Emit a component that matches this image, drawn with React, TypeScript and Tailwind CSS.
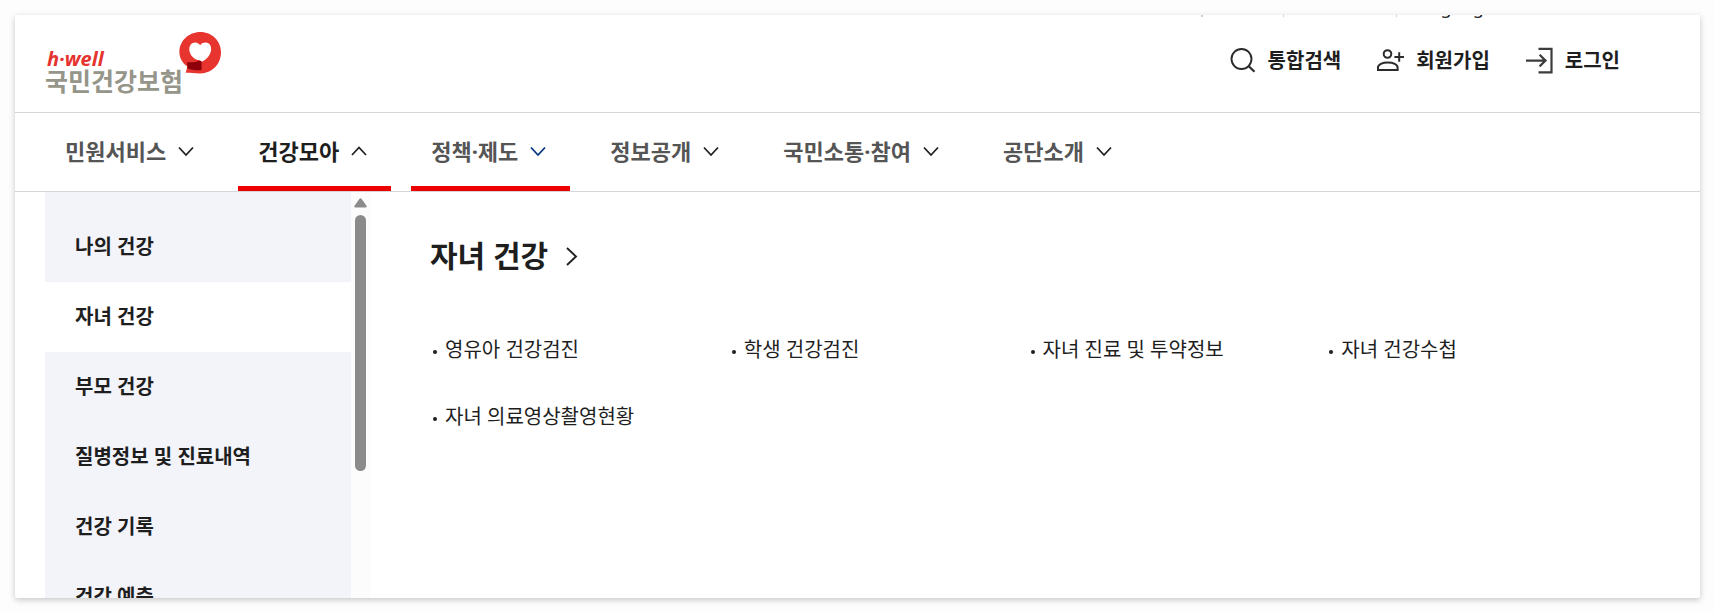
import React from 'react';

type NavItem = {
  label: string;
  open?: boolean;
  marked?: boolean;
};

const navItems: NavItem[] = [
  { label: '민원서비스' },
  { label: '건강모아', open: true, marked: true },
  { label: '정책·제도', marked: true },
  { label: '정보공개' },
  { label: '국민소통·참여' },
  { label: '공단소개' },
];

const sideItems = ['나의 건강', '자녀 건강', '부모 건강', '질병정보 및 진료내역', '건강 기록', '건강 예측'];

const links = ['영유아 건강검진', '학생 건강검진', '자녀 진료 및 투약정보', '자녀 건강수첩', '자녀 의료영상촬영현황'];

const SearchIcon = () => (
  <svg className="w-7 h-7" viewBox="0 0 28 28" fill="none" stroke="#2b2b2b" strokeWidth="1.9" aria-hidden="true">
    <circle cx="13.5" cy="12" r="10" />
    <path d="M20.5 19l6 5.7" strokeWidth="2.2" />
  </svg>
);

const JoinIcon = () => (
  <svg className="w-7 h-7" viewBox="0 0 28 28" fill="none" stroke="#2b2b2b" strokeWidth="2" aria-hidden="true">
    <circle cx="11.5" cy="7" r="3.8" />
    <path d="M2 23v-2.400c0-3 4.400-5 9.800-5s9.800 2 9.800 5V23z" />
    <path d="M18.4 10H28M23.2 5.200v9.600" />
  </svg>
);

const LoginIcon = () => (
  <svg className="w-7 h-7" viewBox="0 0 28 28" fill="none" stroke="#3c3c3c" strokeWidth="2.2" aria-hidden="true">
    <path d="M13.500 1.800h13v23.600h-13" />
    <path d="M1 13.600h19.500M14.600 7.800l5.900 5.800-5.900 5.800" />
  </svg>
);

const Chevron = ({ up, color }: { up?: boolean; color: string }) => (
  <svg className="w-6 h-6" viewBox="0 0 24 24" fill="none" stroke={color} strokeWidth="1.8" aria-hidden="true">
    <path d={up ? 'M5 16l7-7.5 7 7.5' : 'M5 8.5l7 7.5 7-7.5'} />
  </svg>
);

const Logo = () => (
  <a href="#home" className="flex items-start">
    <span className="flex flex-col w-[134px] pt-[17px] whitespace-nowrap">
      <span className="pl-[2px] font-['Open_Sans','Noto_Sans',sans-serif] text-[20px] leading-[20px] font-bold italic text-[#e5332f]">
        h·well
      </span>
      <span className="text-[25px] leading-[24px] font-bold text-[#96958a]">국민건강보험</span>
    </span>
    <svg className="w-[43px] h-[43px]" viewBox="0 0 43 43" aria-hidden="true">
      <path
        d="M21.4 0C33 0 42 9 42 20.3c0 12-9 20.9-20.3 21.1-5 .1-9.5-.6-15-.6l1.7-6.2C3.5 31.3.4 26 .4 20 .4 9 9.5 0 21.4 0z"
        fill="#e7342f"
      />
      <path d="M8.3 30c5 .8 9.500-.2 14.300-2.300V38c-4.600.5-9.600.2-14.300-1.800z" fill="#8e0009" />
      <path
        d="M21.2 13.2c1.500-2 3.400-2.600 5.400-2.600 3.700 0 5.700 3 5.500 6.800-.3 5.400-4.200 9.600-9.200 12.300-1-.9-2.600-1.600-4.300-1.600-5-2-8.300-6.600-8.300-10.700 0-3.900 2.300-6.800 5.800-6.800 2 0 3.700.9 5.100 2.600z"
        fill="#fff"
      />
    </svg>
  </a>
);

const Header = () => (
  <header className="shrink-0 border-b border-[#d6d6d6]">
    <div className="flex items-end justify-end h-1 overflow-hidden pr-[206px] text-[18px] leading-[24px] text-[#1e1e1e]">
      <span className="w-[2px] h-[2px] mb-[2px] mr-20 bg-[#cfcfcf]" />
      <span className="w-px h-[2px] mb-[2px] mr-28 bg-[#cfcfcf]" />
      <span className="w-px h-[2px] mb-[2px] mr-[13px] bg-[#cfcfcf]" />
      <a href="#language">Language</a>
    </div>
    <div className="flex items-start justify-between h-[93px] pl-[30px] pr-20 pt-[13px]">
      <Logo />
      <div className="flex items-center gap-[35px] mt-[15px] text-[20px] leading-[28px] font-bold text-[#1e1e1e]">
        <button type="button" className="flex items-center gap-3">
          <SearchIcon />
          통합검색
        </button>
        <a href="#join" className="flex items-center gap-3">
          <JoinIcon />
          회원가입
        </a>
        <a href="#login" className="flex items-center gap-3">
          <LoginIcon />
          로그인
        </a>
      </div>
    </div>
  </header>
);

const MainNav = () => (
  <nav className="shrink-0 flex gap-5 h-[79px] pl-[30px] border-b border-[#d6d6d6]">
    {navItems.map((item) => (
      <button
        key={item.label}
        type="button"
        aria-expanded={!!item.open}
        className={`flex items-center gap-2 px-5 pt-[2px] border-b-[5px] text-[22px] leading-[32px] font-bold whitespace-nowrap ${
          item.marked ? 'border-b-[#ec0000]' : 'border-b-transparent'
        } ${item.open ? 'text-[#1e1e1e]' : 'text-[#555]'}`}
      >
        {item.label}
        <Chevron up={item.open} color={item.marked && !item.open ? '#063a7c' : '#222'} />
      </button>
    ))}
  </nav>
);

const SideMenu = () => (
  <aside className="flex shrink-0 overflow-hidden">
    <ul className="w-[306px] pt-5 bg-[#f3f4fa] text-[20px] leading-[30px] font-bold text-[#1e1e1e]">
      {sideItems.map((label) => (
        <li key={label}>
          <a href="#menu" className={`block px-[30px] py-5 ${label === '자녀 건강' ? 'bg-white' : ''}`}>
            {label}
          </a>
        </li>
      ))}
    </ul>
    <div className="flex flex-col items-center w-[19px] pt-[6px] bg-[#fcfcfc]">
      <svg className="w-[13px] h-[10px]" viewBox="0 0 13 10" aria-hidden="true">
        <path d="M5.5.8q1-1.2 2 0l5 7q.6 1.7-1 1.7h-10q-1.6 0-1-1.7z" fill="#8b8b8b" />
      </svg>
      <div className="w-[11px] h-[256px] mt-[7px] rounded-full bg-[#8b8b8b]" />
    </div>
  </aside>
);

const App = () => {
  return (
    <div className="h-screen p-[15px] bg-[#fdfdfd] font-['Noto_Sans','Noto_Sans_CJK_KR',sans-serif]">
      <div className="flex flex-col h-full overflow-hidden rounded-[2px] bg-white shadow-[0_2px_6px_rgba(0,0,0,0.22)]">
        <Header />
        <MainNav />
        <div className="flex flex-1 min-h-0 pl-[30px]">
          <SideMenu />
          <main className="flex-1 pl-[60px] pr-[75px] pt-[42px] text-[#1e1e1e]">
            <h2 className="text-[30px] leading-[44px] font-bold">
              <a href="#children" className="inline-flex items-center gap-3">
                자녀 건강
                <svg className="w-6 h-6" viewBox="0 0 24 24" fill="none" stroke="#222" strokeWidth="1.9" aria-hidden="true">
                  <path d="M7 4l9 8.5L7 21" />
                </svg>
              </a>
            </h2>
            <ul className="grid grid-cols-4 gap-y-[37px] mt-[57px] text-[20px] leading-[30px]">
              {links.map((label) => (
                <li key={label}>
                  <a href="#link" className="flex items-center gap-2 pl-[3px] whitespace-nowrap">
                    <span className="w-1 h-1 mt-1 rounded-full bg-[#1e1e1e]" />
                    {label}
                  </a>
                </li>
              ))}
            </ul>
          </main>
        </div>
      </div>
    </div>
  );
};

export default App;
